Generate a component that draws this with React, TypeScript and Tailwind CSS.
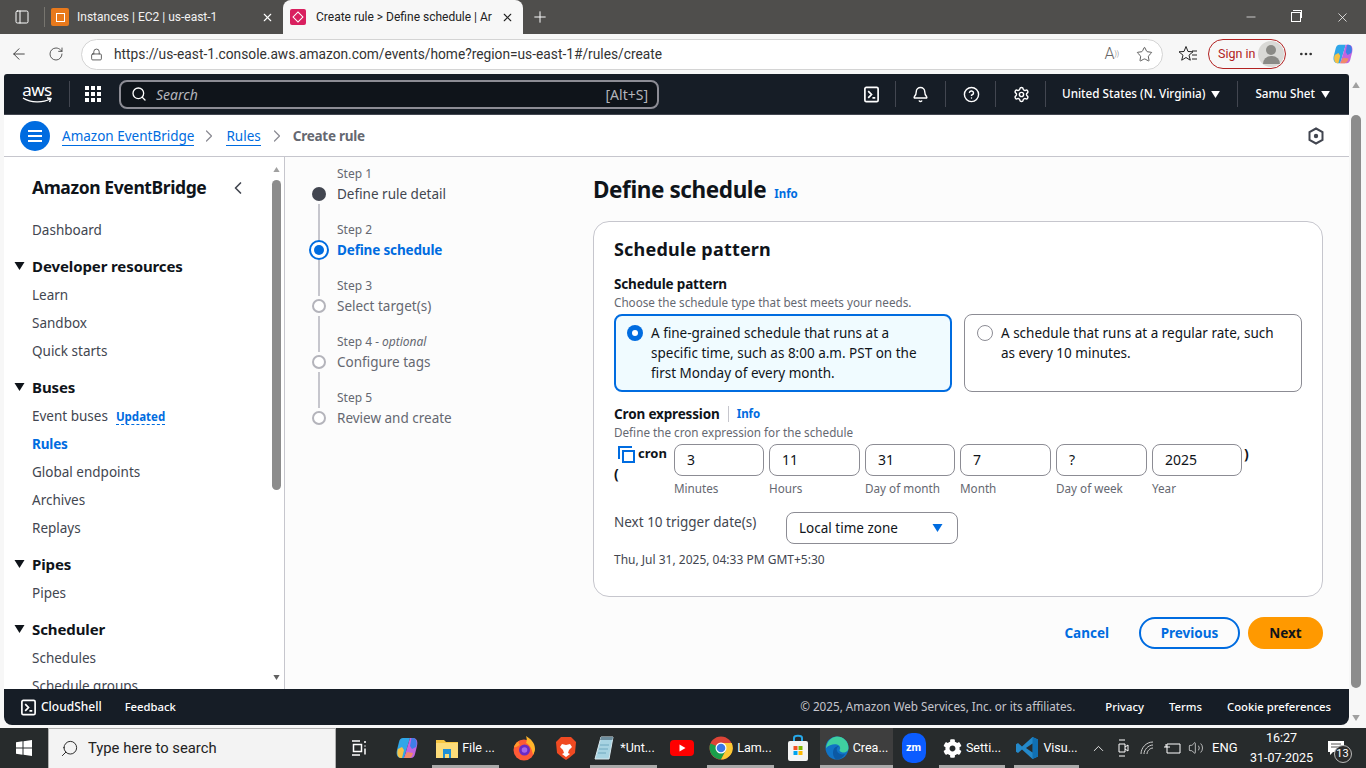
import {
  ArrowLeft,
  Bell,
  ChevronLeft,
  ChevronRight,
  ChevronUp,
  CircleHelp,
  Ellipsis,
  Lock,
  Minus,
  PanelLeft,
  Plus,
  RotateCw,
  Search,
  Settings,
  Star,
  Volume2,
  X,
} from "lucide-react";
import { FaCog } from "react-icons/fa";

const AWS_FONT = "font-['Noto_Sans','Open_Sans',sans-serif]";
const UI_FONT = "font-['Roboto','Noto_Sans',sans-serif]";

function Caret({ className }: { className: string }) {
  return (
    <svg viewBox="0 0 10 8" className={className}>
      <path d="M0 0h10L5 8z" fill="currentColor" />
    </svg>
  );
}

function ShellIcon({ size = 18 }: { size?: number }) {
  return (
    <svg width={size} height={size} viewBox="0 0 18 18" fill="none" stroke="currentColor" strokeWidth="1.8">
      <rect x="2" y="1.5" width="14" height="15" rx="1.5" />
      <path d="M5.5 5.5 9 9l-3.5 3.5M10 12.5h3" />
    </svg>
  );
}

function EdgeLogo({ size = 24 }: { size?: number }) {
  return (
    <svg width={size} height={size} viewBox="0 0 24 24">
      <circle cx="12" cy="12" r="11.5" fill="#1173c5" />
      <path d="M1 12C2 4 8 .5 12 .5 18 .5 23.5 5 23.5 12c0 3-3 5-6 4.5-2-.3-3-1.5-3-2.5 1-1 1-3-.5-4.500C11 7.500 5 8 1 12z" fill="#3fd0a0" />
      <path d="M8 17c0-5 3-7 6-7-2 1-3 3-2 5 1 3 5 4 8 3-2 3-5 5.500-8 5.500-2 0-4-3-4-6.500z" fill="#0c59a4" />
    </svg>
  );
}

function CopilotLogo({ size = 24 }: { size?: number }) {
  return (
    <svg width={size} height={size} viewBox="0 0 24 24">
      <path d="M8 2h7l-3 10-3 10H6C2 22 1 18 2 14L4 6c.5-2.500 2-4 4-4z" fill="#2fa6e8" />
      <path d="M3 13l4-2 2 3-2 8H6C2.500 22 1.500 17 3 13z" fill="#f6c244" />
      <path d="M16 22H9l3-10 3-10h3c4 0 5 4 4 8l-2 8c-.5 2.500-2 4-4 4z" fill="#c264e0" />
      <path d="M21 11l-4 2-2-3 1.500-8H18c3.500 0 4.500 5 3 9z" fill="#3e7fe8" />
      <path d="M9 22l3-6 6 1c-.7 3-2 5-4 5z" fill="#f08a6a" />
    </svg>
  );
}

function ChromeLogo() {
  return (
    <svg width="24" height="24" viewBox="0 0 24 24">
      <circle cx="12" cy="12" r="11.500" fill="#dd4437" />
      <path d="M12 12 1.500 7.500A11.500 11.500 0 0 0 12 23.500l5-9z" fill="#1a9e4b" />
      <path d="M12 7h10.700A11.500 11.500 0 0 1 12 23.500L17 14z" fill="#fcc934" />
      <circle cx="12" cy="12" r="5.500" fill="#fff" />
      <circle cx="12" cy="12" r="4.300" fill="#3b78e7" />
    </svg>
  );
}

function FirefoxLogo() {
  return (
    <svg width="24" height="26" viewBox="0 0 24 26">
      <circle cx="12" cy="15" r="10.500" fill="#ff5a36" />
      <path d="M14 1c5 3 9 7 9 13 0 2-1 4-2 6-1-6-3-10-7-12 1-2 1-4 0-7z" fill="#ffb42a" />
      <path d="M2 12c1-3 3-5 5-6-1 2 0 3 1 4-3 1-4 3-6 2z" fill="#ff9a2a" />
      <circle cx="12.500" cy="15" r="5.500" fill="#6a2bc4" />
      <circle cx="12.500" cy="15" r="2.800" fill="#a565e8" />
    </svg>
  );
}

function BraveLogo() {
  return (
    <svg width="22" height="26" viewBox="0 0 22 24">
      <path d="M6 1h10l3 3 2 2-1 11-6 5-3 2-3-2-6-5L1 6l2-2z" fill="#f04a22" />
      <path d="M7 8l4 1 4-1 2 3-3 3-1 3 2 1-4 3-4-3 2-1-1-3-3-3z" fill="#fff" />
    </svg>
  );
}

function NotepadLogo() {
  return (
    <svg width="24" height="26" viewBox="0 0 24 24">
      <path d="M9 1h12l-4 22H3z" fill="#a7d3e2" stroke="#d8e8ee" strokeWidth="1" />
      <path d="M9 1h12l-.6 3H8z" fill="#6d8e9e" />
      <path d="M8 9h9M7 13h9M6 17h8" stroke="#6fa8bf" strokeWidth="1" />
    </svg>
  );
}

function StoreLogo() {
  return (
    <svg width="24" height="28" viewBox="0 0 24 28">
      <path d="M8 8V4c0-3 8-3 8 0v4" fill="none" stroke="#26a8e8" strokeWidth="2" />
      <rect x="2" y="7" width="20" height="20" rx="2" fill="#f4f4f4" />
      <rect x="7.500" y="12" width="4" height="4" fill="#f25022" />
      <rect x="12.500" y="12" width="4" height="4" fill="#7fba00" />
      <rect x="7.500" y="17" width="4" height="4" fill="#00a4ef" />
      <rect x="12.500" y="17" width="4" height="4" fill="#ffb900" />
    </svg>
  );
}

function VsCodeLogo() {
  return (
    <svg width="24" height="26" viewBox="0 0 24 24">
      <path d="M17.500 1 23 3.500v17L17.500 23 7 13.500l-4 3.500-2-1.200V8.200L3 7l4 3.500z" fill="#2489ca" />
      <path d="M17.500 1 23 3.500v17L17.500 23z" fill="#1070b3" />
      <path d="M17.500 7.500 11 12l6.500 4.500z" fill="#272b2c" />
    </svg>
  );
}

function TaskButton({
  width,
  label,
  icon,
  open,
  active,
}: {
  width: string;
  label?: string;
  icon: React.ReactNode;
  open?: boolean;
  active?: boolean;
}) {
  return (
    <div
      className={`relative flex h-full shrink-0 items-center justify-center gap-[4px] ${width} ${
        active ? "bg-[#3e3e3e]" : ""
      }`}
    >
      {icon}
      {label && <span className="whitespace-nowrap text-[12.5px] text-white">{label}</span>}
      {open && <div className="absolute bottom-0 left-0 right-0 h-[3px] bg-[#aaaaaa]" />}
    </div>
  );
}

function NavItem({ children, active }: { children: React.ReactNode; active?: boolean }) {
  return (
    <div className={`flex h-[28px] items-center whitespace-nowrap pl-[28px] text-[13.5px] ${active ? "font-bold tracking-[-0.15px] text-[#006ce0]" : "text-[#424650]"}`}>
      {children}
    </div>
  );
}

function NavSection({ title }: { title: string }) {
  return (
    <div className="mt-[8px] flex h-[29px] items-center gap-[7px] pb-[1px] pl-[10px] text-[15px] font-bold tracking-[-0.1px] text-[#0f141a]">
      <Caret className="h-[8px] w-[11px] text-[#0f141a]" />
      {title}
    </div>
  );
}

const steps = [
  { label: "Step 1", name: "Define rule detail", state: "done" },
  { label: "Step 2", name: "Define schedule", state: "active" },
  { label: "Step 3", name: "Select target(s)", state: "todo" },
  { label: "Step 4", optional: true, name: "Configure tags", state: "todo" },
  { label: "Step 5", name: "Review and create", state: "todo" },
];

function StepDot({ state }: { state: string }) {
  if (state === "done") return <div className="h-[14px] w-[14px] rounded-full bg-[#424650]" />;
  if (state === "active")
    return (
      <div className="flex h-[20px] w-[20px] items-center justify-center rounded-full border-2 border-[#006ce0] bg-white">
        <div className="h-[10px] w-[10px] rounded-full bg-[#006ce0]" />
      </div>
    );
  return <div className="h-[14px] w-[14px] rounded-full border-2 border-[#b4b4bb] bg-white" />;
}

const cronFields = [
  { label: "Minutes", value: "3", width: "w-[90px]" },
  { label: "Hours", value: "11", width: "w-[91px]" },
  { label: "Day of month", value: "31", width: "w-[90px]" },
  { label: "Month", value: "7", width: "w-[91px]" },
  { label: "Day of week", value: "?", width: "w-[91px]" },
  { label: "Year", value: "2025", width: "w-[90px]" },
];

export default function App() {
  return (
    <div className={`flex h-[768px] w-[1366px] flex-col overflow-hidden bg-[#f7f7f7] ${UI_FONT}`}>
      {/* browser tabs */}
      <div className="flex h-[34px] shrink-0 items-center bg-[#4f4e4c] text-white">
        <div className="flex w-[44px] justify-center">
          <PanelLeft size={16} strokeWidth={1.5} />
        </div>
        <div className="h-[20px] w-px bg-[#77756f]" />
        <div className="flex h-full w-[238px] items-center pl-[6px] pr-[9px]">
          <div className="flex h-[18px] w-[18px] items-center justify-center rounded-[2px] bg-[#e8791c]">
            <div className="h-[9px] w-[9px] border border-white" />
          </div>
          <span className="ml-[8px] flex-1 truncate text-[12px] text-[#f2f2f2]">Instances | EC2 | us-east-1</span>
          <X size={13} />
        </div>
        <div className="flex h-[34px] w-[240px] items-center rounded-t-[8px] bg-[#f7f7f7] pl-[7px] pr-[9px] text-[#222]">
          <div className="flex h-[16px] w-[16px] items-center justify-center rounded-[2px] bg-[#d9205f]">
            <div className="h-[8px] w-[8px] rotate-45 border border-white" />
          </div>
          <span className="ml-[10px] flex-1 overflow-hidden whitespace-nowrap pb-[1px] text-[12px]">Create rule &gt; Define schedule | Ar</span>
          <X size={13} className="ml-[4px]" />
        </div>
        <Plus size={18} strokeWidth={1.3} className="ml-[8px]" />
        <div className="flex-1" />
        <div className="flex w-[136px] items-center pl-[14px]">
          <Minus size={14} strokeWidth={1.2} />
          <div className="relative ml-[33px] h-[10px] w-[10px] border border-white">
            <div className="absolute left-[1px] top-[-3px] h-[8px] w-[9px] border-r border-t border-white" />
          </div>
          <X size={15} strokeWidth={1.2} className="ml-[34px]" />
        </div>
      </div>

      {/* browser toolbar */}
      <div className="flex h-[40px] shrink-0 items-center bg-[#f7f7f7] text-[#333]">
        <ArrowLeft size={18} strokeWidth={1.2} className="ml-[10px]" />
        <RotateCw size={16} strokeWidth={1.2} className="ml-[20px]" />
        <div className="ml-[17px] flex h-[31px] w-[1082px] items-center rounded-full border border-[#d4d4d4] bg-white pl-[8px] pr-[9px]">
          <Lock size={13} strokeWidth={1.4} />
          <span className="ml-[11px] flex-1 text-[13.75px] text-[#333]">https://us-east-1.console.aws.amazon.com/events/home?region=us-east-1#/rules/create</span>
          <span className="mr-[17px] text-[16px] font-light text-[#666]">A<sup className="text-[7px]">))</sup></span>
          <Star size={17} strokeWidth={1.1} />
        </div>
        <svg width="20" height="18" viewBox="0 0 20 18" fill="none" stroke="#222" strokeWidth="1" className="ml-[15px]">
          <path d="M8 1.500 10 6.500l5 .3-4 3.400 1.300 5L8 12.500l-4.300 2.700L5 10.200 1 6.800l5-.3zM14 6h5M14 10h5M14 14h5" />
        </svg>
        <div className="ml-[10px] flex h-[30px] w-[78px] items-center justify-between rounded-full border border-[#b22222] pl-[9px] pr-[1px]">
          <span className="text-[12.5px] text-[#b22222]">Sign in</span>
          <div className="flex h-[26px] w-[26px] flex-col items-center justify-center overflow-hidden rounded-full bg-[#d9d9d6]">
            <div className="h-[10px] w-[10px] rounded-full bg-[#8a8a86]" />
            <div className="mt-[1px] h-[8px] w-[17px] rounded-t-full bg-[#8a8a86]" />
          </div>
        </div>
        <Ellipsis size={16} className="ml-[12px]" />
        <div className="ml-[18px]">
          <CopilotLogo size={22} />
        </div>
      </div>

      {/* console window */}
      <div className="flex min-h-0 flex-1 pb-[3px] pl-[4px] pr-[4px]">
        <div className={`flex min-w-0 flex-1 flex-col overflow-hidden rounded-b-[8px] rounded-t-[3px] bg-white ${AWS_FONT}`}>
          {/* aws header */}
          <div className="flex h-[41px] shrink-0 items-center border-b border-[#424650] bg-[#161d26] text-white">
            <div className="ml-[17px] flex w-[32px] flex-col items-center leading-none">
              <span className="mt-[-3px] text-[17px] font-normal leading-[15px] tracking-[-0.5px]">aws</span>
              <svg width="31" height="7" viewBox="0 0 31 7" fill="none">
                <path d="M1 1c8 5 20 5 27 1M25 1l4 .5-1.500 3.500" stroke="#fff" strokeWidth="1.400" />
              </svg>
            </div>
            <div className="ml-[16px] h-[26px] w-px bg-[#424650]" />
            <div className="ml-[15px] grid grid-cols-3 gap-[2px]">
              {Array.from({ length: 9 }).map((_, i) => (
                <div key={i} className="h-[4px] w-[4px] bg-white" />
              ))}
            </div>
            <div className="ml-[18px] flex h-[29px] w-[540px] items-center rounded-[8px] border-2 border-[#8c8c94] bg-[#0f141a] pl-[10px] pr-[9px]">
              <Search size={16} strokeWidth={2} />
              <span className="ml-[9px] flex-1 text-[14px] italic text-[#b4b4bb]">Search</span>
              <span className="text-[14px] text-[#b4b4bb]">[Alt+S]</span>
            </div>
            <div className="ml-[204px]"><ShellIcon size={17} /></div>
            <div className="ml-[15px] h-[26px] w-px bg-[#424650]" />
            <Bell size={17} strokeWidth={2} className="ml-[16px]" />
            <div className="ml-[16px] h-[26px] w-px bg-[#424650]" />
            <CircleHelp size={17} strokeWidth={2} className="ml-[17px]" />
            <div className="ml-[15px] h-[26px] w-px bg-[#424650]" />
            <Settings size={17} strokeWidth={2} className="ml-[17px]" />
            <div className="ml-[15px] h-[26px] w-px bg-[#424650]" />
            <span className="ml-[16px] whitespace-nowrap text-[11.7px] font-medium">United States (N. Virginia)</span>
            <Caret className="ml-[6px] h-[7px] w-[9px]" />
            <div className="ml-[17px] h-[26px] w-px bg-[#424650]" />
            <span className="ml-[17px] whitespace-nowrap text-[11.7px] font-medium">Samu Shet</span>
            <Caret className="ml-[6px] h-[7px] w-[9px]" />
          </div>

          {/* breadcrumbs */}
          <div className="flex h-[42px] shrink-0 items-center border-b border-[#c6c6cd] bg-white">
            <div className="ml-[16px] flex h-[30px] w-[30px] items-center justify-center rounded-full bg-[#006ce0]">
              <svg width="16" height="14" viewBox="0 0 16 14" stroke="#fff" strokeWidth="2">
                <path d="M1 2h14M1 7h14M1 12h14" />
              </svg>
            </div>
            <a className="ml-[12px] mt-[2px] border-b border-[#006ce0] text-[13.5px] leading-[17px] text-[#006ce0]">Amazon EventBridge</a>
            <ChevronRight size={20} strokeWidth={1.5} className="ml-[5px] text-[#8c8c94]" />
            <a className="ml-[7px] mt-[2px] border-b border-[#006ce0] text-[13.5px] leading-[17px] text-[#006ce0]">Rules</a>
            <ChevronRight size={20} strokeWidth={1.5} className="ml-[6px] text-[#8c8c94]" />
            <span className="ml-[6px] mt-[2px] text-[13.5px] font-bold tracking-[-0.25px] text-[#656871]">Create rule</span>
            <div className="flex-1" />
            <svg width="16" height="18" viewBox="0 0 16 18" fill="none" stroke="#424650" strokeWidth="2" className="mr-[25px]">
              <path d="M8 1.500 14.500 5v8L8 16.500 1.500 13V5z" />
              <circle cx="8" cy="9" r="2.200" fill="#424650" stroke="none" />
            </svg>
          </div>

          {/* body */}
          <div className="flex min-h-0 flex-1">
            {/* side nav */}
            <div className="relative h-full w-[281px] shrink-0 overflow-hidden border-r border-[#c6c6cd] bg-white">
              <div className="flex h-[59px] items-center justify-between pb-[1px] pl-[28px] pr-[36px] pt-[3px] text-[17.5px] font-bold tracking-[-0.4px] text-[#0f141a]">
                Amazon EventBridge
                <ChevronLeft size={20} strokeWidth={2} className="text-[#424650]" />
              </div>
              <NavItem>Dashboard</NavItem>
              <NavSection title="Developer resources" />
              <NavItem>Learn</NavItem>
              <NavItem>Sandbox</NavItem>
              <NavItem>Quick starts</NavItem>
              <NavSection title="Buses" />
              <NavItem>
                Event buses
                <span className="ml-[8px] mt-[2px] border-b border-dashed border-[#006ce0] text-[11.5px] font-bold leading-[15px] text-[#006ce0]">Updated</span>
              </NavItem>
              <NavItem active>Rules</NavItem>
              <NavItem>Global endpoints</NavItem>
              <NavItem>Archives</NavItem>
              <NavItem>Replays</NavItem>
              <NavSection title="Pipes" />
              <NavItem>Pipes</NavItem>
              <NavSection title="Scheduler" />
              <NavItem>Schedules</NavItem>
              <NavItem>Schedule groups</NavItem>
              {/* inner scrollbar */}
              <div className="absolute bottom-0 right-[3px] top-0 flex w-[9px] flex-col items-center bg-white">
                <Caret className="mt-[10px] h-[5px] w-[9px] rotate-180 text-[#a0a0a0]" />
                <div className="mt-[8px] h-[310px] w-[9px] rounded-full bg-[#8c8c8c]" />
                <div className="flex-1" />
                <Caret className="mb-[9px] h-[5px] w-[9px] text-[#606060]" />
              </div>
            </div>

            {/* wizard steps */}
            <div className="w-[308px] shrink-0 bg-[#fcfcfc] pl-[24px] pt-[10px]">
              {steps.map((s, i) => (
                <div key={s.label} className="flex h-[56px]">
                  <div className="flex w-[20px] flex-col items-center">
                    <div className={`h-[17px] w-[2px] ${i === 0 ? "bg-transparent" : "bg-[#c6c6cd]"}`} />
                    <div className="flex h-[20px] w-[20px] items-center justify-center">
                      <StepDot state={s.state} />
                    </div>
                    <div className={`w-[2px] flex-1 ${i === steps.length - 1 ? "bg-transparent" : "bg-[#c6c6cd]"}`} />
                  </div>
                  <div className="ml-[8px]">
                    <div className="h-[14px] text-[12px] leading-[14px] text-[#656871]">
                      {s.label}
                      {s.optional && <i> - optional</i>}
                    </div>
                    <div className={`mt-[3px] text-[13.5px] leading-[20px] ${s.state === "active" ? "font-bold tracking-[-0.15px] text-[#006ce0]" : s.state === "done" ? "text-[#424650]" : "text-[#656871]"}`}>
                      {s.name}
                    </div>
                  </div>
                </div>
              ))}
            </div>

            {/* main */}
            <div className="min-w-0 flex-1 bg-[#fcfcfc] pr-[26px] pt-[17px]">
              <div className="flex h-[32px] items-center">
                <h1 className="text-[22.5px] font-bold leading-[32px] tracking-[-0.4px] text-[#0f141a]">Define schedule</h1>
                <span className="ml-[8px] mt-[8px] text-[11.5px] font-bold text-[#006ce0]">Info</span>
              </div>
              <div className="mt-[15px] h-[376px] rounded-[16px] border border-[#c6c6cd] bg-white px-[20px] pt-[15px]">
                <h2 className="text-[18px] font-bold leading-[24px] tracking-[0.2px] text-[#0f141a]">Schedule pattern</h2>
                <div className="mt-[14px] text-[13.5px] font-bold leading-[18px] tracking-[-0.15px] text-[#0f141a]">Schedule pattern</div>
                <div className="mt-[1px] text-[11.7px] leading-[16px] text-[#656871]">Choose the schedule type that best meets your needs.</div>
                <div className="mt-[4px] flex gap-[12px]">
                  <div className="flex h-[78px] w-[338px] gap-[8px] rounded-[8px] border-2 border-[#006ce0] bg-[#f0fbff] pl-[11px] pr-[16px] pt-[7px]">
                    <div className="mt-[2px] flex h-[16px] w-[16px] shrink-0 items-center justify-center rounded-full bg-[#006ce0]">
                      <div className="h-[6px] w-[6px] rounded-full bg-white" />
                    </div>
                    <p className="text-[13.5px] leading-[20px] text-[#0f141a]">A fine-grained schedule that runs at a specific time, such as 8:00 a.m. PST on the first Monday of every month.</p>
                  </div>
                  <div className="flex h-[78px] w-[338px] gap-[8px] rounded-[8px] border border-[#8c8c94] bg-white pl-[12px] pr-[16px] pt-[8px]">
                    <div className="mt-[2px] h-[16px] w-[16px] shrink-0 rounded-full border border-[#8c8c94]" />
                    <p className="text-[13.5px] leading-[20px] text-[#0f141a]">A schedule that runs at a regular rate, such as every 10 minutes.</p>
                  </div>
                </div>
                <div className="mt-[13px] flex h-[18px] items-center text-[13.5px] font-bold tracking-[-0.15px] text-[#0f141a]">
                  Cron expression
                  <div className="ml-[8px] h-[16px] w-px bg-[#c6c6cd]" />
                  <span className="ml-[8px] text-[11.5px] font-bold tracking-normal text-[#006ce0]">Info</span>
                </div>
                <div className="mt-[1px] text-[11.7px] leading-[16px] text-[#656871]">Define the cron expression for the schedule</div>
                <div className="mt-[4px] flex">
                  <div className="w-[60px] shrink-0 text-[14px] font-bold leading-[20px] text-[#0f141a]">
                    <div className="flex items-center pl-[4px]">
                      <svg width="18" height="18" viewBox="0 0 18 18" fill="none" stroke="#006ce0" strokeWidth="2">
                        <path d="M1 14V2h13" />
                        <rect x="5" y="6" width="11" height="11" />
                      </svg>
                      <span className="ml-[2px] mt-[-1px] text-[13px]">cron</span>
                    </div>
                    <div className="mt-[1px]">(</div>
                  </div>
                  <div className="flex gap-[5px]">
                    {cronFields.map((f) => (
                      <div key={f.label} className={f.width}>
                        <div className="flex h-[32px] items-center rounded-[8px] border border-[#8c8c94] bg-white pb-[1px] pl-[12px] text-[14px] text-[#0f141a]">{f.value}</div>
                        <div className="mt-[4px] text-[11.7px] leading-[16px] text-[#656871]">{f.label}</div>
                      </div>
                    ))}
                  </div>
                  <div className="ml-[2px] text-[14px] font-bold leading-[20px] text-[#0f141a]">)</div>
                </div>
                <div className="mt-[16px] flex">
                  <div className="w-[172px] text-[13.5px] leading-[20px] text-[#424650]">Next 10 trigger date(s)</div>
                  <div className="flex h-[32px] w-[172px] items-center justify-between rounded-[8px] border border-[#8c8c94] bg-white pl-[12px] pr-[14px] text-[13.5px] text-[#0f141a]">
                    Local time zone
                    <Caret className="h-[8px] w-[11px] text-[#006ce0]" />
                  </div>
                </div>
                <div className="mt-[8px] text-[12px] leading-[16px] text-[#424650]">Thu, Jul 31, 2025, 04:33 PM GMT+5:30</div>
              </div>
              <div className="mt-[20px] flex h-[32px] items-center justify-end">
                <span className="text-[13.5px] font-bold text-[#006ce0]">Cancel</span>
                <div className="ml-[30px] flex h-[32px] w-[101px] items-center justify-center rounded-full border-2 border-[#006ce0] text-[13.5px] font-bold text-[#006ce0]">Previous</div>
                <div className="ml-[8px] flex h-[32px] w-[75px] items-center justify-center rounded-full bg-[#ff9900] text-[13.5px] font-bold text-[#0f141a]">Next</div>
              </div>
            </div>
          </div>

          {/* console footer */}
          <div className="flex h-[36px] shrink-0 items-center bg-[#161d26] text-[11.3px] font-medium text-white">
            <div className="ml-[16px]"><ShellIcon size={17} /></div>
            <span className="ml-[4px] text-[12px]">CloudShell</span>
            <span className="ml-[23px]">Feedback</span>
            <div className="flex-1" />
            <span className="text-[11.7px] font-normal text-[#c6c6cd]">© 2025, Amazon Web Services, Inc. or its affiliates.</span>
            <span className="ml-[30px]">Privacy</span>
            <span className="ml-[25px]">Terms</span>
            <span className="ml-[25px] mr-[18px]">Cookie preferences</span>
          </div>
        </div>

        {/* page scrollbar */}
        <div className="flex w-[13px] shrink-0 flex-col items-center bg-[#f7f7f7]">
          <Caret className="mt-[8px] h-[6px] w-[10px] rotate-180 text-[#a0a0a0]" />
          <div className="mt-[27px] h-[573px] w-[10px] rounded-full bg-[#8c8c8c]" />
          <div className="flex-1" />
          <Caret className="mb-[4px] h-[6px] w-[10px] text-[#a0a0a0]" />
        </div>
      </div>

      {/* windows taskbar */}
      <div className="flex h-[40px] shrink-0 items-center bg-[#272b2c] text-white">
        <div className="flex h-full w-[48px] items-center justify-center">
          <svg width="16" height="16" viewBox="0 0 16 16" fill="#fff">
            <path d="M0 2.200 6.500 1.300v6.200H0zM7.500 1.200 16 0v7.500H7.500zM0 8.500h6.500v6.200L0 13.800zM7.500 8.500H16V16l-8.500-1.200z" />
          </svg>
        </div>
        <div className="flex h-full w-[288px] items-center border-x border-t border-[#b0b0b0] bg-[#f3f3f3] pl-[11px] text-[#222]">
          <Search size={19} strokeWidth={1.2} className="-scale-x-100" />
          <span className="ml-[9px] text-[14.8px]">Type here to search</span>
        </div>
        <TaskButton
          width="w-[48px]"
          icon={
            <svg width="16" height="16" viewBox="0 0 16 16" fill="none" stroke="#fff" strokeWidth="1">
              <path d="M0 1h8M0 15h8M1.500 4.500h8v7h-8zM13 1v2M13 5.500v1M13 8.500v6" strokeWidth="1.500" />
            </svg>
          }
        />
        <TaskButton width="w-[46px]" icon={<CopilotLogo />} />
        <div className="w-[2px]" />
        <TaskButton
          width="w-[67px]"
          label="File ..."
          open
          icon={
            <svg width="22" height="20" viewBox="0 0 22 20">
              <path d="M0 2h8l2 2h12v16H0z" fill="#f5c542" />
              <path d="M0 5h22v15H0z" fill="#fcdc7a" />
              <path d="M7 11h8v9h-2v-4H9v4H7z" fill="#1f8fd6" />
            </svg>
          }
        />
        <div className="w-[4px]" />
        <TaskButton width="w-[42px]" icon={<FirefoxLogo />} />
        <TaskButton width="w-[42px]" icon={<BraveLogo />} />
        <div className="w-[3px]" />
        <TaskButton width="w-[67px]" label="*Unt..." open icon={<NotepadLogo />} />
        <div className="w-[4px]" />
        <TaskButton
          width="w-[42px]"
          icon={
            <svg width="24" height="16" viewBox="0 0 24 16">
              <rect width="24" height="16" rx="4" fill="#f00" />
              <path d="M9.500 4.500v7l6-3.500z" fill="#fff" />
            </svg>
          }
        />
        <div className="w-[4px]" />
        <TaskButton width="w-[67px]" label="Lam..." open icon={<ChromeLogo />} />
        <div className="w-[3px]" />
        <TaskButton width="w-[42px]" icon={<StoreLogo />} />
        <div className="w-[1px]" />
        <TaskButton width="w-[73px]" label="Crea..." open active icon={<EdgeLogo />} />
        <TaskButton
          width="w-[41px]"
          icon={
            <div className="flex h-[30px] w-[24px] items-center justify-center rounded-[10px] bg-[#0b5cff] text-[11px] font-bold">zm</div>
          }
        />
        <div className="w-[5px]" />
        <TaskButton width="w-[66px]" label="Setti..." open icon={<FaCog size={19} color="#fff" />} />
        <div className="w-[9px]" />
        <TaskButton width="w-[65px]" label="Visu..." open icon={<VsCodeLogo />} />
        <ChevronUp size={17} strokeWidth={1.2} className="ml-[11px]" />
        <svg width="12" height="18" viewBox="0 0 12 18" fill="none" stroke="#fff" strokeWidth="1" className="ml-[10px]">
          <path d="M2 1h6M2 17h6M2 5h6v8H2zM8 8l3-2v6l-3-2" />
        </svg>
        <svg width="14" height="14" viewBox="0 0 14 14" fill="none" stroke="#ccc" strokeWidth="1" className="ml-[11px]">
          <path d="M1 13C1 7 6 1 13 1M4 13c0-4 4-9 9-9M7 13c0-3 3-6 6-6" />
        </svg>
        <svg width="18" height="14" viewBox="0 0 18 14" fill="none" stroke="#fff" strokeWidth="1" className="ml-[9px]">
          <path d="M4 3h13v9H4zM1 6h6M3 3v3" />
        </svg>
        <Volume2 size={16} strokeWidth={1} className="ml-[7px]" />
        <span className="ml-[8px] text-[13px]">ENG</span>
        <div className="ml-[13px] flex w-[62px] flex-col items-center whitespace-nowrap text-[12.5px] leading-[20px]">
          <span>16:27</span>
          <span>31-07-2025</span>
        </div>
        <div className="relative ml-[15px]">
          <svg width="16" height="16" viewBox="0 0 16 16">
            <path d="M0 1h16v11H5l-3 3v-3H0z" fill="#fff" />
            <path d="M3 4h10M3 7h10" stroke="#555" />
          </svg>
          <div className="absolute left-[6px] top-[5px] flex h-[18px] w-[18px] items-center justify-center rounded-full border border-[#bbb] bg-[#2b2b2b] text-[11px]">13</div>
        </div>
      </div>
    </div>
  );
}
